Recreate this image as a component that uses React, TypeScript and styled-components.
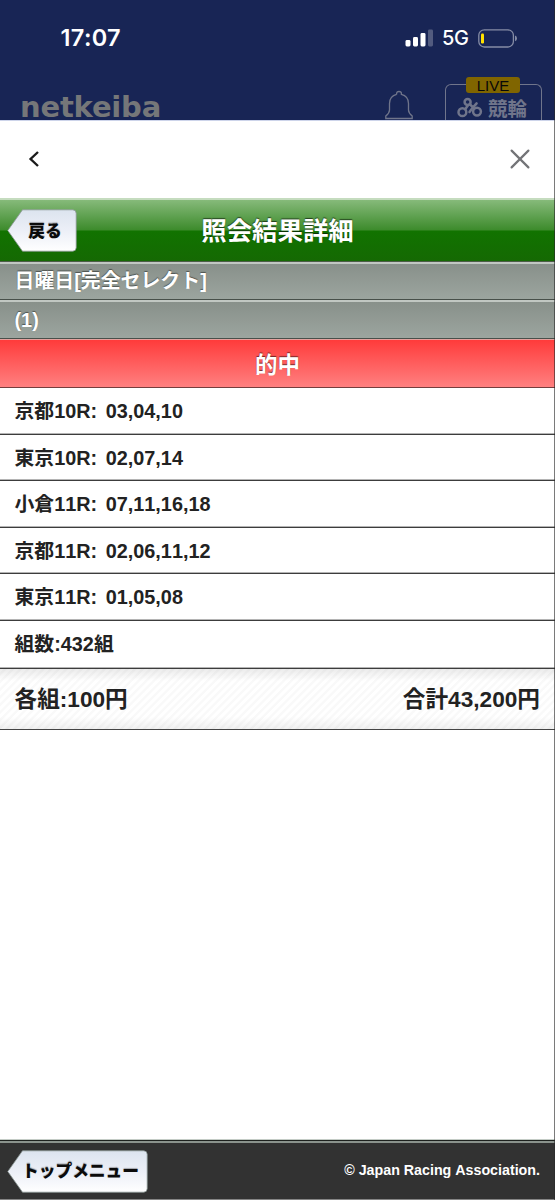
import React from "react";
import styled, { createGlobalStyle } from "styled-components";

const Global = createGlobalStyle`
  * { box-sizing: border-box; }
  body {
    margin: 0;
    background: #fff;
    font-family: "Liberation Sans", "Noto Sans CJK JP", sans-serif;
    font-kerning: none;
    color: #222;
  }
`;

const Screen = styled.div`
  position: relative;
  width: 555px;
  height: 1200px;
  display: flex;
  flex-direction: column;
  background: #fff;
`;

const EdgeLine = styled.div`
  position: absolute;
  top: 0;
  right: 0;
  width: 1px;
  height: 100%;
  background: rgba(40, 40, 40, 0.62);
`;

const PhoneTop = styled.header`
  height: 120px;
  flex: none;
  background: #182555;
  display: flex;
  flex-direction: column;
`;

const StatusBar = styled.div`
  height: 76px;
  flex: none;
  display: flex;
  align-items: center;
  justify-content: space-between;
  padding: 0 37px 0 60.5px;
`;

const Clock = styled.span`
  font: 600 23.5px/28px Inter, sans-serif;
  letter-spacing: 0.35px;
  color: #fff;
`;

const StatusIcons = styled.div`
  display: flex;
  align-items: center;
`;

const Network = styled.span`
  font: 500 20px/24px Inter, sans-serif;
  letter-spacing: -0.4px;
  color: #fff;
  margin: 0 9.5px 0 8px;
`;

const BrandBar = styled.div`
  height: 44px;
  flex: none;
  display: flex;
  padding: 0 13px 0 20px;
`;

const Brand = styled.span`
  height: 26px;
  font: 700 29px/26px "DejaVu Sans", sans-serif;
  letter-spacing: -0.2px;
  color: #757779;
  margin: 18px auto 0 0;
`;

const BellIcon = styled.svg`
  margin: 14px 31px 0 0;
  flex: none;
`;

const LiveBox = styled.div`
  position: relative;
  width: 97px;
  height: 36px;
  flex: none;
  margin-top: 8px;
  border: 1.5px solid #70758b;
  border-bottom: 0;
  border-radius: 6px 6px 0 0;
  display: flex;
  align-items: flex-start;
  padding: 11px 0 0 11px;
  gap: 5px;
`;

const LiveTag = styled.span`
  position: absolute;
  top: -8px;
  left: 20px;
  width: 54px;
  height: 16px;
  border-radius: 3px;
  background: #806500;
  color: #080808;
  text-align: center;
  font: 400 15px/17px "Liberation Sans", sans-serif;
`;

const LiveLabel = styled.span`
  font: 700 19.5px/23px "Noto Sans CJK JP", sans-serif;
  color: #70758b;
`;

const SheetBar = styled.div`
  height: 78px;
  flex: none;
  display: flex;
  align-items: center;
  justify-content: space-between;
  padding: 0 25px 2px 27px;
  border-top: 1px solid #cdd4ea;
`;

const TitleBar = styled.div`
  position: relative;
  height: 64px;
  flex: none;
  display: flex;
  align-items: center;
  justify-content: center;
  border-top: 2px solid #c5dcbf;
  border-bottom: 1px solid #4c5c47;
  background: linear-gradient(#86ba7a 0, #3d8b2c 30px, #117300 31px, #156903 100%);
`;

const Title = styled.h1`
  margin: 0;
  font: 700 25.4px/36px "Noto Sans CJK JP", sans-serif;
  color: #fff;
  text-shadow: 0 -1px 1px rgba(0, 0, 0, 0.6);
  padding-bottom: 4px;
`;

const ArrowShape = styled.svg`
  position: absolute;
  inset: 0;
`;

const ArrowButton = styled.button<{ $w: number }>`
  position: relative;
  width: ${(p) => p.$w}px;
  height: 43px;
  padding: 0 0 2px 6px;
  border: 0;
  background: none;
  flex: none;
`;

const ArrowText = styled.span<{ $size: number }>`
  position: relative;
  font: 900 ${(p) => p.$size}px/24px "Noto Sans CJK JP", sans-serif;
  color: #0b0b0b;
  text-shadow: 0 -1px 1px rgba(0, 0, 0, 0.3);
  white-space: nowrap;
`;

const BackSlot = styled.div`
  position: absolute;
  left: 7px;
  top: 9px;
  display: flex;
`;

const GreyBar = styled.div<{ $h: number; $lift: number }>`
  height: ${(p) => p.$h}px;
  flex: none;
  padding: 0 14.5px ${(p) => p.$lift}px;
  display: flex;
  align-items: center;
  border-top: 2px solid #c1c7c2;
  border-bottom: 1px solid #48504a;
  background: linear-gradient(#88908a, #9ca59f);
  color: #fff;
  font-size: 19.9px;
  font-weight: 700;
  text-shadow: 0 -1px 1px rgba(0, 0, 0, 0.45);
`;

const HitBar = styled.div`
  height: 49px;
  flex: none;
  display: flex;
  align-items: center;
  justify-content: center;
  border-top: 1px solid #e5a09d;
  border-bottom: 1px solid #743e3e;
  background: linear-gradient(#ff3b3b, #ff8080);
  color: #fff;
  font-size: 22.5px;
  font-weight: 700;
  text-shadow: 0 -1px 1px rgba(0, 0, 0, 0.55);
  padding-bottom: 2px;
`;

const Row = styled.div<{ $h: number }>`
  height: ${(p) => p.$h}px;
  flex: none;
  display: flex;
  align-items: baseline;
  padding: 9px 14.5px 0;
  border-bottom: 1px solid #3c3c3c;
  box-shadow: inset 0 -1px 0 #b4b4b4;
  font-size: 19.85px;
  line-height: 29px;
  font-weight: 700;
  white-space: pre;
`;

const Picks = styled.span`
  margin-left: 8.5px;
`;

const TotalRow = styled.div`
  height: 61px;
  flex: none;
  display: flex;
  align-items: center;
  justify-content: space-between;
  padding: 0 15px 4px 14.5px;
  border-bottom: 1px solid #444;
  background:
    linear-gradient(rgba(0, 0, 0, 0.08), transparent 12px, transparent 48px, rgba(0, 0, 0, 0.06)),
    repeating-linear-gradient(135deg, #fff 0 2.2px, #f9f9f9 3px 4.6px, #fff 5.4px);
  font-size: 22.65px;
  font-weight: 700;
`;

const Blank = styled.div`
  flex: 1;
`;

const Footer = styled.footer`
  height: 60px;
  flex: none;
  display: flex;
  align-items: center;
  justify-content: space-between;
  padding: 2px 15px 0 7px;
  border-top: 1px solid #1d211e;
  border-bottom: 1px solid #858585;
  background: #323232;
  box-shadow: inset 0 2px 0 #8b938d, 0 -1px 0 #c4ccc6;
`;

const Copyright = styled.span`
  color: #fff;
  font-size: 14.25px;
  font-weight: 700;
  padding-bottom: 2px;
`;

function Arrow({ w, size, children }: { w: number; size: number; children: string }) {
  const id = `arrow-fill-${w}`;
  return (
    <ArrowButton $w={w}>
      <ArrowShape width={w} height="43" viewBox={`0 0 ${w} 43`}>
        <defs>
          <linearGradient id={id} x1="0" y1="0" x2="0" y2="1">
            <stop offset="0" stopColor="#dce4ef" />
            <stop offset="0.5" stopColor="#eceff7" />
            <stop offset="1" stopColor="#ffffff" />
          </linearGradient>
        </defs>
        <path
          d={`M15.5 .8 H${w - 4.5} Q${w - 0.8} .8 ${w - 0.8} 4.5 V38.5 Q${w - 0.8} 42.2 ${w - 4.5} 42.2 H15.5 L.8 21.5 Z`}
          fill={`url(#${id})`}
          stroke="#8b9896"
          strokeWidth="0.8"
        />
      </ArrowShape>
      <ArrowText $size={size}>{children}</ArrowText>
    </ArrowButton>
  );
}

const races = [
  { name: "京都10R:", picks: "03,04,10", h: 47 },
  { name: "東京10R:", picks: "02,07,14", h: 46 },
  { name: "小倉11R:", picks: "07,11,16,18", h: 47 },
  { name: "京都11R:", picks: "02,06,11,12", h: 46 },
  { name: "東京11R:", picks: "01,05,08", h: 47 },
];

export default function App() {
  return (
    <Screen>
      <Global />
      <PhoneTop>
        <StatusBar>
          <Clock>17:07</Clock>
          <StatusIcons>
            <svg width="29" height="18" viewBox="0 0 29 18">
              <g fill="#fff">
                <rect x="0.5" y="11" width="5" height="6.5" rx="1.4" />
                <rect x="8" y="8" width="5" height="9.5" rx="1.4" />
                <rect x="15.5" y="4" width="5" height="13.5" rx="1.4" />
                <rect x="23" y="0.5" width="5" height="17" rx="1.4" opacity="0.25" />
              </g>
            </svg>
            <Network>5G</Network>
            <svg width="40" height="19" viewBox="0 0 40 19">
              <rect x="0.8" y="0.8" width="34.6" height="17.2" rx="5.5" fill="none" stroke="#858ca5" strokeWidth="1.3" />
              <rect x="3" y="4.5" width="3" height="10" rx="1.2" fill="#ffe000" />
              <path d="M37 6.5 Q39 7.3 39 9.4 Q39 11.5 37 12.3 Z" fill="#858ca5" />
            </svg>
          </StatusIcons>
        </StatusBar>
        <BrandBar>
          <Brand>netkeiba</Brand>
          <BellIcon width="30" height="30" viewBox="0 0 30 30" fill="none" stroke="#70758b" strokeWidth="1.3">
            <path d="M12.6 4.4 V3.6 Q12.6 1.5 15 1.5 Q17.4 1.5 17.4 3.6 V4.4 Q24.5 6.3 24.5 13.5 V20 Q24.5 23 28.2 26 V28.5 H1.8 V26 Q5.5 23 5.5 20 V13.5 Q5.5 6.3 12.6 4.4" />
          </BellIcon>
          <LiveBox>
            <LiveTag>LIVE</LiveTag>
            <svg width="26" height="22" viewBox="0 0 26 22" fill="none" stroke="#70758b" strokeWidth="2.5" strokeLinecap="round">
              <circle cx="5.4" cy="16.2" r="3.9" />
              <circle cx="20" cy="15.6" r="3.9" />
              <circle cx="10.6" cy="5.9" r="3" />
              <path d="M8.2 13.2 L11 9.3 M12.9 8.2 L17 12.6 M12.5 16 L15 12.6 L19.6 7.4" />
            </svg>
            <LiveLabel>競輪</LiveLabel>
          </LiveBox>
        </BrandBar>
      </PhoneTop>

      <SheetBar>
        <svg width="14" height="18" viewBox="0 0 14 18" fill="none" stroke="#1b1b1b" strokeWidth="2.4">
          <path d="M11 2 L3.6 9 L11 16" />
        </svg>
        <svg width="20" height="20" viewBox="0 0 20 20" stroke="#737477" strokeWidth="2.2" strokeLinecap="round">
          <path d="M1.6 1.6 L18.4 18.4 M18.4 1.6 L1.6 18.4" />
        </svg>
      </SheetBar>

      <TitleBar>
        <BackSlot>
          <Arrow w={70} size={16.8}>戻る</Arrow>
        </BackSlot>
        <Title>照会結果詳細</Title>
      </TitleBar>
      <GreyBar $h={38} $lift={4}>日曜日[完全セレクト]</GreyBar>
      <GreyBar $h={39} $lift={0}>(1)</GreyBar>
      <HitBar>的中</HitBar>

      {races.map((r) => (
        <Row key={r.name} $h={r.h}>
          {r.name}
          <Picks>{r.picks}</Picks>
        </Row>
      ))}
      <Row $h={48}>組数:432組</Row>
      <TotalRow>
        <span>各組:100円</span>
        <span>合計43,200円</span>
      </TotalRow>

      <Blank />
      <Footer>
        <Arrow w={141} size={16.7}>トップメニュー</Arrow>
        <Copyright>© Japan Racing Association.</Copyright>
      </Footer>
      <EdgeLine />
    </Screen>
  );
}
